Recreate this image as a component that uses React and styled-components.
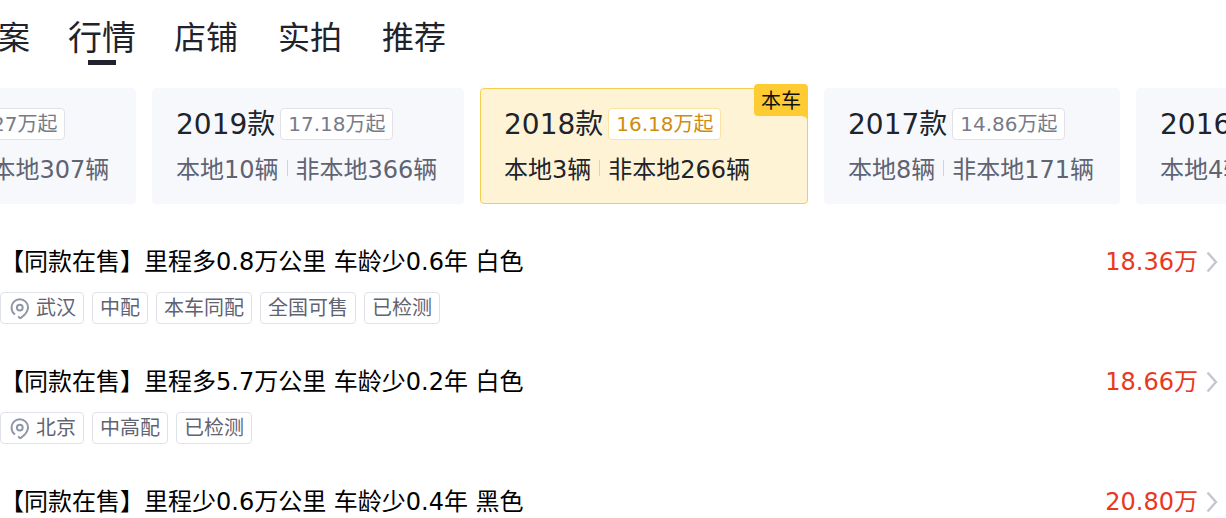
import styled, { createGlobalStyle } from "styled-components"

const tabs = ['方案','行情','店铺','实拍','推荐']

const years = [
    {year:'2020款', price:'18.27万起', local:'本地12辆', other:'非本地307辆', width:312},
    {year:'2019款', price:'17.18万起', local:'本地10辆', other:'非本地366辆', width:312},
    {year:'2018款', price:'16.18万起', local:'本地3辆', other:'非本地266辆', width:328, current:true},
    {year:'2017款', price:'14.86万起', local:'本地8辆', other:'非本地171辆', width:296},
    {year:'2016款', price:'13.50万起', local:'本地4辆', other:'非本地120辆', width:296},
]

const cars = [
    {id:1, title:'【同款在售】里程多0.8万公里 车龄少0.6年 白色', price:'18.36万', city:'武汉', tags:['中配','本车同配','全国可售','已检测']},
    {id:2, title:'【同款在售】里程多5.7万公里 车龄少0.2年 白色', price:'18.66万', city:'北京', tags:['中高配','已检测']},
    {id:3, title:'【同款在售】里程少0.6万公里 车龄少0.4年 黑色', price:'20.80万', tags:[]},
]

function Pin(){
    return(
        <svg width="22" height="22" viewBox="0 0 22 22" fill="none" stroke="#8f96a8" strokeWidth="2" aria-hidden="true">
            <path d="M7 17.4C4.6 15.8 3.6 13.2 3.6 10.4A8.2 8.2 0 0 1 20 10.4C20 14.8 16.4 18.4 12.2 21.4L10.2 19.4"/>
            <circle cx="11.8" cy="10.6" r="2.9"/>
        </svg>
    )
}

function Arrow(){
    return(
        <svg width="12" height="22" viewBox="0 0 12 22" fill="none" stroke="#c4c7cf" strokeWidth="2.4" aria-hidden="true">
            <path d="M1.5 1.5L10 11L1.5 20.5"/>
        </svg>
    )
}

export default function App(){
    return(
        <Page>
            <GlobalStyle/>
            <Tabs>
                {
                    tabs.map(t=>
                        <Tab key={t} $active={t==='行情'}>{t}</Tab>)
                }
            </Tabs>
            <Years>
                {
                    years.map(y=>
                        <Year key={y.year} $current={y.current} $width={y.width}>
                            {y.current && <Mark>本车</Mark>}
                            <YearTop>
                                <YearName>{y.year}</YearName>
                                <YearPrice $current={y.current}>{y.price}</YearPrice>
                            </YearTop>
                            <Counts $current={y.current}>
                                <span>{y.local}</span>
                                <Divider/>
                                <span>{y.other}</span>
                            </Counts>
                        </Year>)
                }
            </Years>
            <List>
                {
                    cars.map(c=>
                        <Car key={c.id}>
                            <CarLink href="#">
                                <Title>{c.title}</Title>
                                <Price>{c.price}</Price>
                                <Arrow/>
                            </CarLink>
                            <Tags>
                                {c.city && <Tag><Pin/>{c.city}</Tag>}
                                {
                                    c.tags.map(t=>
                                        <Tag key={t}>{t}</Tag>)
                                }
                            </Tags>
                        </Car>)
                }
            </List>
        </Page>
    )
}

const GlobalStyle = createGlobalStyle`
    *{
        box-sizing: border-box;
    }
    body{
        margin: 0;
        background: #fff;
        color: #20232b;
        font-family: "DejaVu Sans", "Noto Sans CJK SC", sans-serif;
    }
    button{
        margin: 0;
        padding: 0;
        border: none;
        background: none;
        color: inherit;
        font-family: inherit;
        cursor: pointer;
    }
`
const Page = styled.main`
    height: 100vh;
    overflow: hidden;
`
const Tabs = styled.nav`
    display: flex;
    gap: 40px;
    height: 76px;
    margin-left: -34px;
`
const Tab = styled.button`
    position: relative;
    flex-shrink: 0;
    height: 76px;
    font-size: ${p=>p.$active ? '34px' : '32px'};
    line-height: 76px;
    && {
        margin: ${p=>p.$active ? '0 -2px' : '0'};
    }
    &::after{
        content: "";
        display: ${p=>p.$active ? 'block' : 'none'};
        position: absolute;
        left: 50%;
        bottom: 11px;
        width: 28px;
        height: 5px;
        margin-left: -14px;
        background: #20232b;
    }
`
const Years = styled.section`
    display: flex;
    gap: 16px;
    margin-left: -176px;
    padding-top: 12px;
`
const Year = styled.button`
    && {
        position: relative;
        flex: 0 0 ${p=>p.$width}px;
        padding: 19px 23px 17px;
        border: 1px solid ${p=>p.$current ? '#f5d050' : '#f6f8fc'};
        border-radius: 4px;
        background: ${p=>p.$current ? '#fff3d6' : '#f6f8fc'};
        text-align: left;
    }
`
const Mark = styled.span`
    position: absolute;
    top: -5px;
    right: -1px;
    width: 54px;
    height: 32px;
    border-radius: 4px 4px 0 4px;
    background: #ffcb32;
    color: #111;
    font-size: 20px;
    line-height: 34px;
    text-align: center;
    &::after{
        content: "";
        position: absolute;
        top: 32px;
        right: 0;
        width: 5px;
        height: 5px;
        background: radial-gradient(circle at 0 100%, transparent 4px, #ffcb32 5px);
    }
`
const YearTop = styled.span`
    display: flex;
    align-items: center;
    gap: 5px;
    height: 32px;
    white-space: nowrap;
`
const YearName = styled.span`
    font-size: 28px;
    line-height: 32px;
    padding-top: 2px;
    color: #20232b;
`
const YearPrice = styled.span`
    height: 32px;
    padding: 0 6px 0 7px;
    border: 1px solid ${p=>p.$current ? '#fbe3a4' : '#dfe2e9'};
    border-radius: 4px;
    background: #fff;
    color: ${p=>p.$current ? '#cf8c10' : '#777b88'};
    font-size: 20px;
    line-height: 30px;
`
const Counts = styled.span`
    display: flex;
    align-items: center;
    height: 32px;
    margin-top: 14px;
    color: ${p=>p.$current ? '#20232b' : '#5f6372'};
    font-size: 24px;
    line-height: 34px;
    white-space: nowrap;
`
const Divider = styled.i`
    width: 1px;
    height: 16px;
    margin: 0 8px 4px;
    background: #cfd2d8;
`
const List = styled.ul`
    margin: 0;
    padding: 38px 0 0;
    list-style: none;
`
const Car = styled.li`
    height: 120px;
`
const CarLink = styled.a`
    display: flex;
    align-items: center;
    height: 40px;
    padding-right: 8px;
    color: #000;
    font-size: 24px;
    line-height: 40px;
    text-decoration: none;
    white-space: nowrap;
`
const Title = styled.span`
    flex: 1;
`
const Price = styled.span`
    margin-right: 8px;
    color: #e8391f;
`
const Tags = styled.div`
    display: flex;
    gap: 8px;
    margin-top: 10px;
`
const Tag = styled.span`
    display: flex;
    align-items: center;
    gap: 6px;
    height: 32px;
    padding: 0 7px;
    border: 1px solid #dfe2e9;
    border-radius: 4px;
    color: #5f6372;
    font-size: 20px;
    line-height: 30px;
`
